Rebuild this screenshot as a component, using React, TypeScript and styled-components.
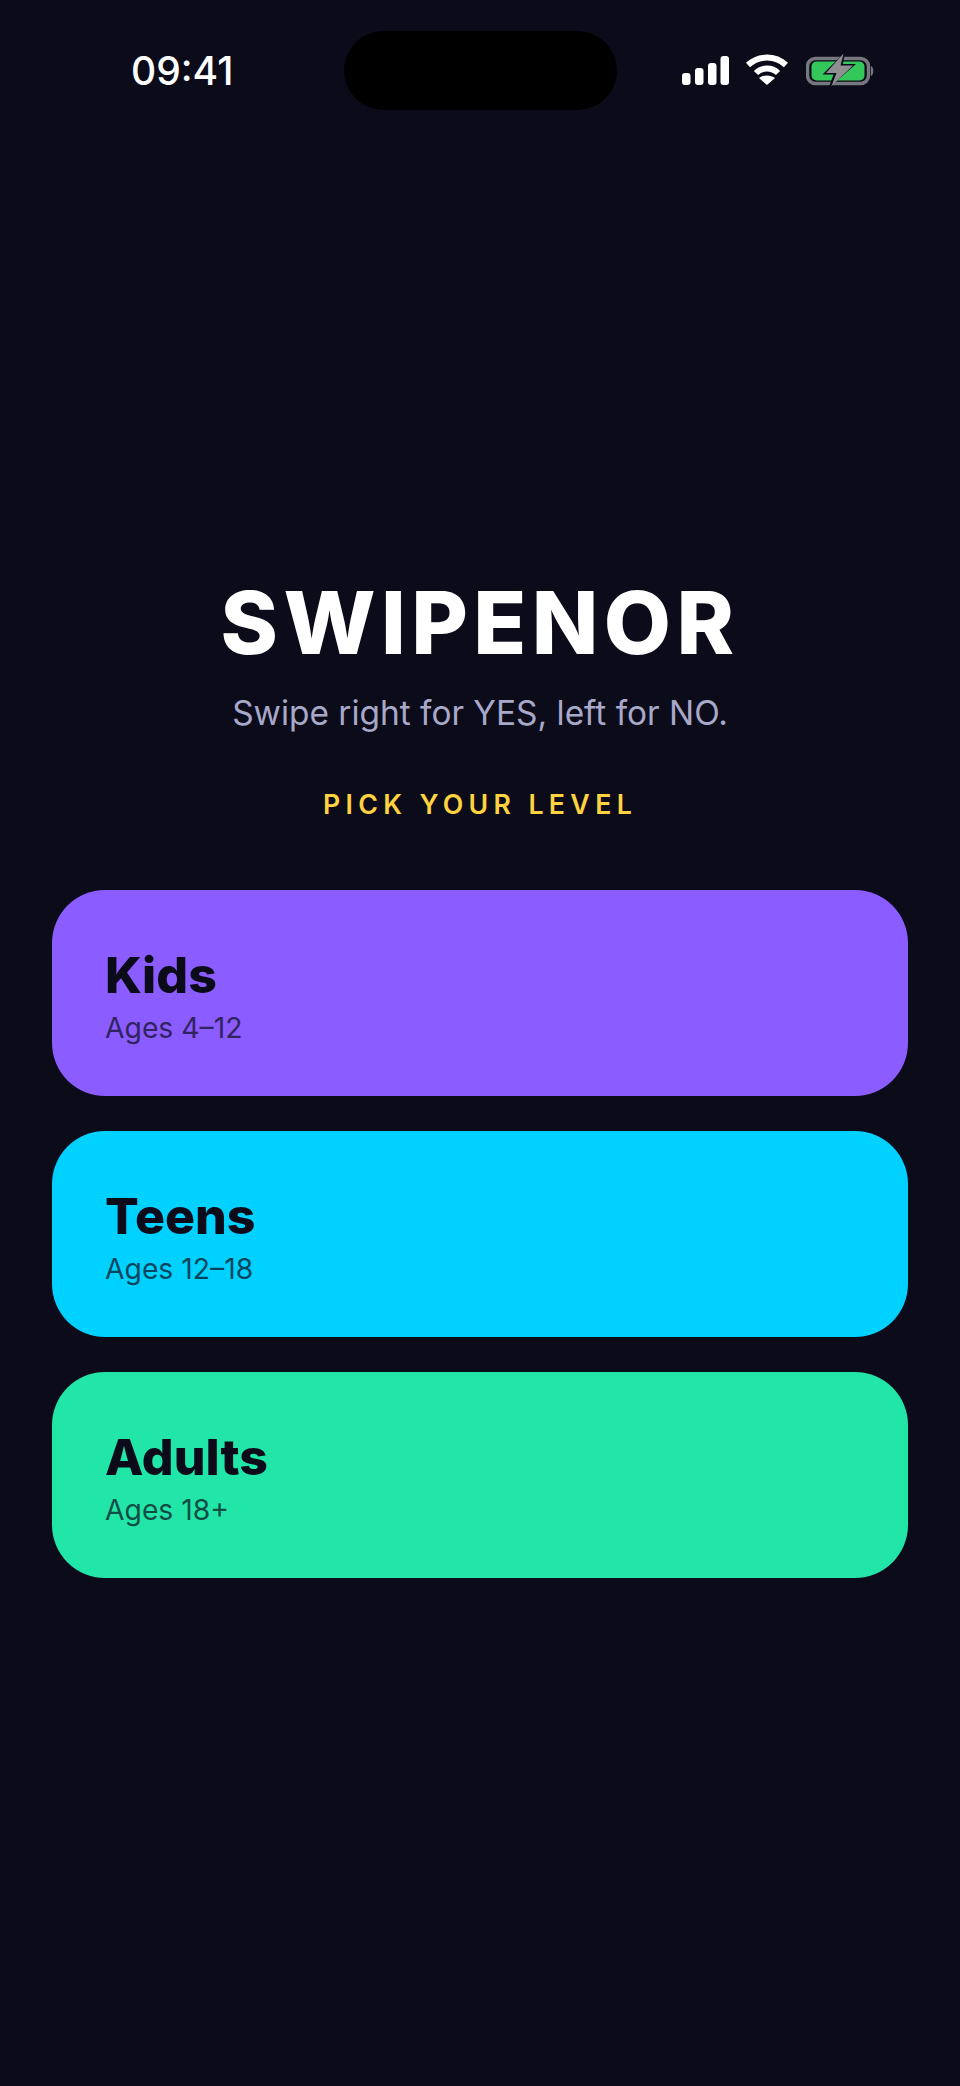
import React from "react";
import styled, { createGlobalStyle } from "styled-components";

const GlobalStyle = createGlobalStyle`
  html, body {
    margin: 0;
    padding: 0;
    background: #0b0b1a;
  }
  * {
    box-sizing: border-box;
  }
`;

const Screen = styled.div`
  width: 960px;
  height: 2086px;
  overflow: hidden;
  background: #0b0b1a;
  font-family: Inter, "Liberation Sans", sans-serif;
  -webkit-font-smoothing: antialiased;
`;

const StatusBar = styled.div`
  display: grid;
  grid-template-columns: 344px 273px 1fr;
  height: 110px;
  padding-top: 31px;
`;

const Time = styled.div`
  padding-left: 131px;
  padding-top: 17px;
  font-size: 39px;
  line-height: 45px;
  font-weight: 500;
  color: #fff;
`;

const Island = styled.div`
  height: 79px;
  border-radius: 40px;
  background: #000;
`;

const StatusIcons = styled.div`
  display: flex;
  align-items: flex-start;
  padding: 23px 0 0 64px;
`;

const Hero = styled.header`
  display: flex;
  flex-direction: column;
  align-items: center;
  margin-top: 461px;
`;

const Title = styled.h1`
  margin: 0;
  font-size: 87px;
  line-height: 103px;
  font-weight: 800;
  letter-spacing: 5.4px;
  color: #fff;
`;

const Subtitle = styled.p`
  margin: 18px 0 0;
  font-size: 33.4px;
  line-height: 43px;
  font-weight: 400;
  color: #a8a8c8;
`;

const Prompt = styled.p`
  margin: 53px 0 0;
  font-size: 26.7px;
  line-height: 33px;
  font-weight: 600;
  letter-spacing: 5.35px;
  color: #ffd23f;
`;

const LevelList = styled.div`
  display: flex;
  flex-direction: column;
  gap: 35px;
  margin-top: 69px;
  padding: 0 52px;
`;

const LevelCard = styled.button<{ $bg: string }>`
  display: flex;
  flex-direction: column;
  justify-content: center;
  align-items: flex-start;
  height: 206px;
  padding: 0 53px;
  border: 0;
  border-radius: 53px;
  background: ${({ $bg }) => $bg};
  font-family: inherit;
  text-align: left;
`;

const LevelName = styled.span`
  margin-top: 3px;
  font-size: 50px;
  line-height: 60px;
  font-weight: 850;
  color: #0b0b1a;
`;

const LevelAges = styled.span`
  margin-top: 6px;
  font-size: 28.3px;
  line-height: 34px;
  font-weight: 400;
  color: #0b0b1a;
  opacity: 0.7;
`;

const levels = [
  { name: "Kids", ages: "Ages 4–12", color: "#8b5cff" },
  { name: "Teens", ages: "Ages 12–18", color: "#00d1ff" },
  { name: "Adults", ages: "Ages 18+", color: "#22e6a8" },
];

const SignalIcon = () => (
  <svg width="48" height="32" viewBox="0 0 48 32" fill="#fff">
    <rect x="1" y="19" width="8.5" height="12" rx="3" />
    <rect x="14" y="14" width="8.5" height="17" rx="3" />
    <rect x="27" y="9" width="8.5" height="22" rx="3" />
    <rect x="39.5" y="2" width="8.5" height="29" rx="3" />
  </svg>
);

const WifiIcon = () => (
  <svg width="44" height="32" viewBox="0 0 44 32" fill="none" style={{ marginLeft: 16 }}>
    <path d="M3 11 C 14 1, 30 1, 41 11" stroke="#fff" strokeWidth="6" strokeLinecap="butt" />
    <path d="M11 19 C 17 13, 27 13, 33 19" stroke="#fff" strokeWidth="6" strokeLinecap="butt" />
    <path d="M22 31 L 14 24 C 18 20.5, 26 20.5, 30 24 Z" fill="#fff" />
  </svg>
);

const BatteryIcon = () => (
  <svg width="70" height="36" viewBox="0 0 70 36" fill="none" style={{ marginLeft: 17, marginTop: -2 }}>
    <rect x="1.5" y="6.5" width="61" height="25" rx="8" stroke="#77777f" strokeWidth="3.5" />
    <rect x="5.5" y="9.5" width="53" height="19" rx="5" fill="#34c759" />
    <path d="M65 14 C 68 15, 68 23, 65 24 Z" fill="#77777f" />
    <path d="M39 0 L 16.5 22.5 H 27.5 L 22.5 36 L 50 12 H 37 Z" fill="#0b0b1a" />
    <path d="M37.5 1.5 L 20 21 H 30.5 L 25.5 34 L 47 13.5 H 34.5 Z" fill="#8e8e93" />
  </svg>
);

export default function App() {
  return (
    <Screen>
      <GlobalStyle />
      <StatusBar>
        <Time>09:41</Time>
        <Island />
        <StatusIcons>
          <SignalIcon />
          <WifiIcon />
          <BatteryIcon />
        </StatusIcons>
      </StatusBar>
      <Hero>
        <Title>SWIPENOR</Title>
        <Subtitle>Swipe right for YES, left for NO.</Subtitle>
        <Prompt>PICK YOUR LEVEL</Prompt>
      </Hero>
      <LevelList>
        {levels.map((level) => (
          <LevelCard key={level.name} $bg={level.color}>
            <LevelName>{level.name}</LevelName>
            <LevelAges>{level.ages}</LevelAges>
          </LevelCard>
        ))}
      </LevelList>
    </Screen>
  );
}
